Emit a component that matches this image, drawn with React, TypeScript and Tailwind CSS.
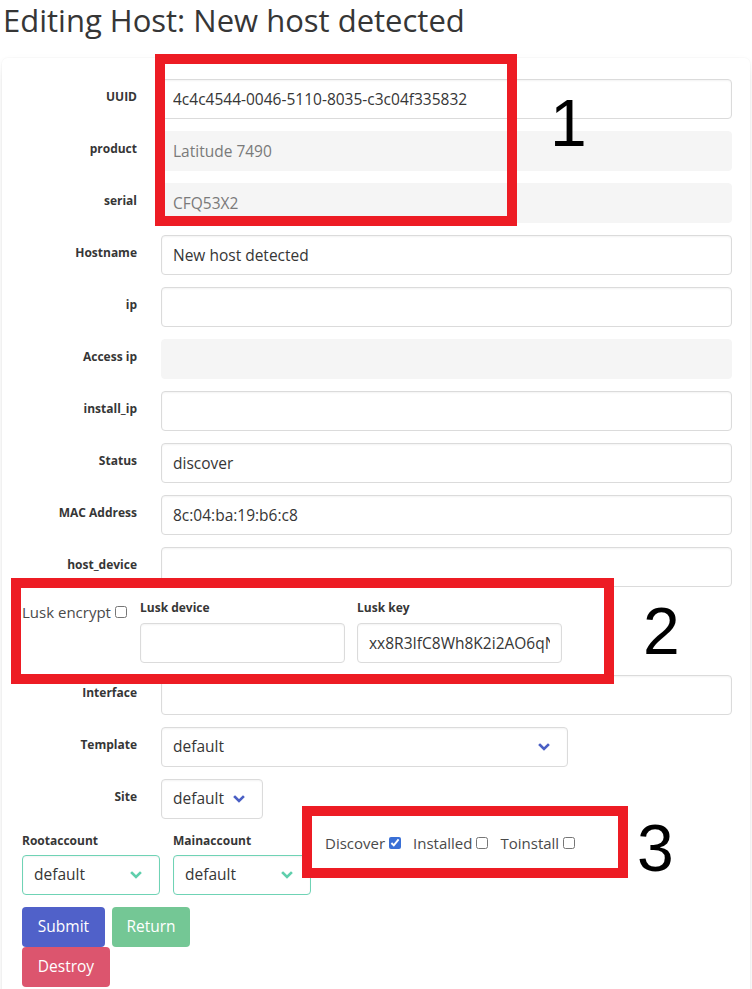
import React from 'react';

type Field = {
  label: string;
  value?: string;
  disabled?: boolean;
};

const fields: Field[] = [
  { label: 'UUID', value: '4c4c4544-0046-5110-8035-c3c04f335832' },
  { label: 'product', value: 'Latitude 7490', disabled: true },
  { label: 'serial', value: 'CFQ53X2', disabled: true },
  { label: 'Hostname', value: 'New host detected' },
  { label: 'ip' },
  { label: 'Access ip', disabled: true },
  { label: 'install_ip' },
  { label: 'Status', value: 'discover' },
  { label: 'MAC Address', value: '8c:04:ba:19:b6:c8' },
  { label: 'host_device' },
];

const inputCls =
  'block w-full h-10 rounded-[4px] border px-[11px] text-[15.5px] outline-none';
const enabledCls =
  'border-[#dbdbdb] bg-white text-[#363636] shadow-[inset_0_0.0625em_0.125em_rgba(10,10,10,0.05)]';
const disabledCls = 'border-[#f5f5f5] bg-[#f5f5f5] text-[#7a7a7a]';

function Chevron({ color }: { color: string }): React.JSX.Element {
  return (
    <svg width="12" height="8" viewBox="0 0 12 8" className="shrink-0">
      <polyline points="2,2 6,6 10,2" fill="none" stroke={color} strokeWidth={2.6} strokeLinecap="square" />
    </svg>
  );
}

function FieldLabel({ children }: { children: React.ReactNode }): React.JSX.Element {
  return (
    <div className="w-[115px] mr-6 shrink-0 text-right pt-[4px]">
      <label className="text-[12px] leading-[18px] font-bold text-[#363636]">{children}</label>
    </div>
  );
}

function HorizontalField({ field }: { field: Field }): React.JSX.Element {
  return (
    <div className="flex mb-3">
      <FieldLabel>{field.label}</FieldLabel>
      <div className="flex-1">
        <input
          readOnly
          disabled={field.disabled}
          value={field.value ?? ''}
          className={`${inputCls} ${field.disabled ? disabledCls : enabledCls}`}
        />
      </div>
    </div>
  );
}

function Select({
  value,
  width,
  tone,
}: {
  value: string;
  width: string;
  tone: 'plain' | 'success';
}): React.JSX.Element {
  const border = tone === 'success' ? 'border-[#6fd3b5]' : 'border-[#dbdbdb]';
  const arrow = tone === 'success' ? '#5fcfac' : '#4a5fc4';
  return (
    <div
      className={`${width} h-10 flex items-center justify-between rounded-[4px] border ${border} bg-white pl-[11px] pr-[17px] text-[15.5px] text-[#363636] shadow-[inset_0_0.0625em_0.125em_rgba(10,10,10,0.05)]`}
    >
      <span>{value}</span>
      <Chevron color={arrow} />
    </div>
  );
}

function Check({ label, checked }: { label: string; checked?: boolean }): React.JSX.Element {
  return (
    <label className="flex items-center text-[15px] leading-6 text-[#4a4a4a] mr-[12px]">
      {label}
      <input type="checkbox" readOnly checked={!!checked} className="ml-[4px] w-[12px] h-[12px] accent-[#3a70d6]" />
    </label>
  );
}

export default function App(): React.JSX.Element {
  return (
    <div className="relative w-[752px] min-h-[989px] overflow-hidden bg-white font-['Open_Sans',sans-serif] text-[#363636]">
      {/* Header */}
      <h1 className="mt-[3px] pl-[3px] text-[31px] leading-[34px] text-[#363636] mb-[21px]">
        Editing Host: New host detected
      </h1>

      {/* Form box */}
      <div className="mx-[2px] rounded-md bg-white pt-[21px] pl-5 pr-[18px] pb-6 shadow-[0_0.5em_1em_-0.125em_rgba(10,10,10,0.1),0_0_0_1px_rgba(10,10,10,0.02)]">
        {fields.map((f) => (
          <HorizontalField key={f.label} field={f} />
        ))}

        {/* Lusk */}
        <div className="flex mb-3">
          <div className="w-[118px] shrink-0 flex items-center h-6 mt-[1px] text-[15px] text-[#4a4a4a]">
            Lusk encrypt
            <input type="checkbox" readOnly className="ml-[4px] w-[12px] h-[12px]" />
          </div>
          <div className="w-[205px] mr-3">
            <label className="block text-[12px] leading-[18px] font-bold mb-[6px]">Lusk device</label>
            <input readOnly value="" className={`${inputCls} ${enabledCls}`} />
          </div>
          <div className="w-[205px]">
            <label className="block text-[12px] leading-[18px] font-bold mb-[6px]">Lusk key</label>
            <input readOnly value="xx8R3IfC8Wh8K2i2AO6qNvT" className={`${inputCls} ${enabledCls}`} />
          </div>
        </div>

        <HorizontalField field={{ label: 'Interface' }} />

        <div className="flex mb-3">
          <FieldLabel>Template</FieldLabel>
          <div className="flex-1">
            <Select value="default" width="w-[407px]" tone="plain" />
          </div>
        </div>

        <div className="flex mb-3">
          <FieldLabel>Site</FieldLabel>
          <div className="flex-1">
            <Select value="default" width="w-[102px]" tone="plain" />
          </div>
        </div>

        {/* Accounts + state */}
        <div className="flex mb-3">
          <div className="w-[138px] mr-[13px]">
            <label className="block text-[12px] leading-[18px] font-bold pt-[1px] mb-[5px]">Rootaccount</label>
            <Select value="default" width="w-[138px]" tone="success" />
          </div>
          <div className="w-[138px] mr-[14px]">
            <label className="block text-[12px] leading-[18px] font-bold pt-[1px] mb-[5px]">Mainaccount</label>
            <Select value="default" width="w-[138px]" tone="success" />
          </div>
          <div className="flex items-start">
            <Check label="Discover" checked />
            <Check label="Installed" />
            <Check label="Toinstall" />
          </div>
        </div>

        {/* Actions */}
        <div className="flex gap-[7px]">
          <button className="w-[83px] h-10 rounded-[4px] bg-[#5061c9] text-white text-[15.5px]">Submit</button>
          <button className="w-[78px] h-10 rounded-[4px] bg-[#74c795] text-white text-[15.5px]">Return</button>
        </div>
        <div className="flex">
          <button className="w-[88px] h-10 rounded-[4px] bg-[#dc556e] text-white text-[15.5px]">Destroy</button>
        </div>
      </div>

      {/* Annotation overlays */}
      <div className="absolute left-[155px] top-[54px] w-[362px] h-[172px] border-[10px] border-[#ed1c24]" />
      <div className="absolute left-[550px] top-[90px] font-['Liberation_Sans',Arial,sans-serif] text-[66px] leading-none text-black">1</div>

      <div className="absolute left-[11px] top-[578px] w-[603px] h-[106px] border-[10px] border-[#ed1c24]" />
      <div className="absolute left-[643px] top-[598px] font-['Liberation_Sans',Arial,sans-serif] text-[66px] leading-none text-black">2</div>

      <div className="absolute left-[637px] top-[815px] font-['Liberation_Sans',Arial,sans-serif] text-[66px] leading-none text-black">3</div>
      <div className="absolute left-[302px] top-[806px] w-[326px] h-[72px] border-[10px] border-[#ed1c24]" />
    </div>
  );
}
